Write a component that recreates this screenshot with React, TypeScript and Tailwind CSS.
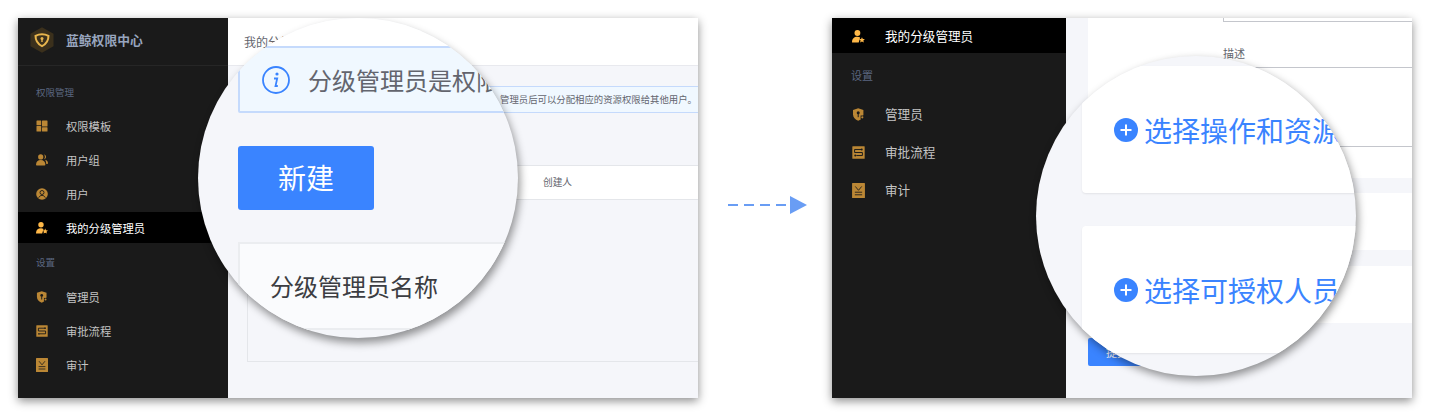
import React from 'react';

const font = { fontFamily: '"Noto Sans CJK SC", "Liberation Sans", sans-serif' };

const GridIcon = () => (
  <svg viewBox="0 0 12 12" className="h-full w-full" fill="currentColor">
    <rect x="0.500" y="0.500" width="4.700" height="4.700" rx="0.500" />
    <rect x="6" y="0.500" width="5.500" height="6" rx="0.500" />
    <rect x="0.500" y="6" width="4.700" height="5.500" rx="0.500" />
    <rect x="6" y="7.300" width="5.500" height="4.200" rx="0.500" />
  </svg>
);

const UsersIcon = () => (
  <svg viewBox="0 0 12 12" className="h-full w-full" fill="currentColor">
    <circle cx="4.700" cy="2.900" r="2.600" />
    <path d="M0 10.800c0-3 1.900-4.700 4.700-4.700s4.700 1.700 4.700 4.700c0 .4-.3.700-.7.700H.7c-.4 0-.7-.3-.7-.7z" />
    <path d="M8 .6c1.200.2 2 1.100 2 2.300S9.200 5 8 5.200c.6-.6.9-1.400.9-2.300S8.600 1.200 8 .6z" />
    <path d="M9.200 5.800c1.700.4 2.800 1.700 2.800 3.500 0 .5-.3.800-.8.800h-.9c-.1-1.700-.5-3.100-1.100-4.300z" />
  </svg>
);

const UserCircleIcon = () => (
  <svg viewBox="0 0 12 12" className="h-full w-full">
    <circle cx="6" cy="6" r="5.800" fill="currentColor" />
    <circle cx="6" cy="4.500" r="2" fill="none" stroke="#1a1a1a" strokeWidth="0.900" />
    <path d="M2.700 9.700c.6-1.500 1.900-2.300 3.300-2.300s2.700.8 3.300 2.300" fill="none" stroke="#1a1a1a" strokeWidth="0.900" />
  </svg>
);

const AdminStarIcon = () => (
  <svg viewBox="0 0 12 12" className="h-full w-full" fill="currentColor">
    <circle cx="5" cy="2.800" r="2.700" />
    <path d="M0 11.200c0-3 1.900-4.900 5-4.900 1 0 1.800.2 2.500.6L6.200 11.600H.4c-.2 0-.4-.2-.4-.4z" />
    <path d="M9.200 6.600l.8 1.600 1.900.2-1.400 1.300.4 1.900-1.700-.9-1.700.9.400-1.900-1.400-1.300 1.900-.2z" />
  </svg>
);

const ShieldIcon = () => (
  <svg viewBox="0 0 11 13" className="h-full w-full">
    <path d="M5.200 0.200L10.400 1.900v4.600c0 3-2.300 5-5.200 6.300C2.300 11.500 0 9.500 0 6.500V1.900z" fill="currentColor" />
    <circle cx="5.200" cy="4.800" r="1.500" fill="#1a1a1a" />
    <rect x="4.700" y="5.800" width="1" height="3.400" fill="#1a1a1a" />
    <rect x="7.600" y="7.500" width="3.400" height="3.600" fill="#1a1a1a" />
    <circle cx="9.300" cy="9.300" r="1.100" fill="currentColor" />
  </svg>
);

const FlowIcon = () => (
  <svg viewBox="0 0 12 12" className="h-full w-full">
    <rect x="0.300" y="0.300" width="11.400" height="11.400" rx="0.500" fill="currentColor" />
    <path d="M2.400 3.200h6M2.400 3.200v2.800h7.200v2.800H4" fill="none" stroke="#1a1a1a" strokeWidth="0.900" />
    <circle cx="9" cy="3.200" r="0.900" fill="#1a1a1a" />
    <circle cx="3" cy="8.800" r="0.900" fill="#1a1a1a" />
  </svg>
);

const AuditIcon = () => (
  <svg viewBox="0 0 12 14" className="h-full w-full">
    <rect x="0" y="0" width="12" height="14" rx="0.500" fill="currentColor" />
    <path d="M3 3.200l3 3.600 3-3.600M2.600 8.600h6.800M2.600 11h6.800" fill="none" stroke="#1a1a1a" strokeWidth="0.800" />
  </svg>
);

const Logo = () => (
  <svg viewBox="0 0 24 26" className="h-[26px] w-[24px]">
    <path d="M12 0.300L23.500 6.800v12.400L12 25.700 0.500 19.200V6.800z" fill="#3b301c" />
    <path d="M12 7.200c2.300 0 4.500.6 6.500 1.600 0 4.600-2.300 8.300-6.500 10.400-4.200-2.100-6.500-5.800-6.500-10.400 2-1 4.200-1.600 6.500-1.600z" fill="none" stroke="#e8b54d" strokeWidth="2" />
    <circle cx="12" cy="11.500" r="1.500" fill="#e8b54d" />
    <rect x="11.300" y="12" width="1.400" height="3" fill="#e8b54d" />
  </svg>
);

// left window's sidebar row
const NavRow = ({ icon, label, active, tall }: { icon: React.ReactNode; label: string; active?: boolean; tall?: boolean }) => (
  <div className={`mb-[2px] flex items-center pl-[18px] ${active ? 'h-[31px] bg-black pt-[1px]' : 'h-[32px]'}`}>
    <span className={`flex w-[12px] items-center ${tall ? 'h-[14px]' : 'h-[12px]'} ${active ? 'text-[#ffb848]' : 'text-[#bb8735]'}`}>{icon}</span>
    <span className={`ml-[18px] text-[11.3px] ${active ? 'text-white' : 'text-[#c4c4c4]'}`}>{label}</span>
  </div>
);

// right window's sidebar row, a bit larger
const BigNavRow = ({ icon, label, active, tall }: { icon: React.ReactNode; label: string; active?: boolean; tall?: boolean }) => (
  <div className={`flex items-center pl-[20px] ${active ? 'h-[35px] bg-black pt-[1px]' : 'h-[38px]'}`}>
    <span className={`flex w-[13px] items-center ${tall ? 'h-[15px]' : 'h-[13px]'} ${active ? 'text-[#ffb848]' : 'text-[#bb8735]'}`}>{icon}</span>
    <span className={`ml-[20px] text-[12.6px] ${active ? 'text-white' : 'text-[#c4c4c4]'}`}>{label}</span>
  </div>
);

const PlusCircle = () => (
  <svg viewBox="0 0 24 24" className="h-[24px] w-[24px] shrink-0">
    <circle cx="12" cy="12" r="12" fill="#3a84ff" />
    <path d="M12 6.500v11M6.500 12h11" stroke="#fff" strokeWidth="2" />
  </svg>
);

const LeftWindow = () => (
  <div className="relative flex h-[380px] w-[680px] shrink-0 overflow-hidden shadow-[0_3px_9px_rgba(0,0,0,0.45)]">
    <aside className="w-[210px] shrink-0 bg-[#1a1a1a]">
      <div className="flex h-[48px] items-center border-b border-[#262626] pb-[4px] pl-[12px]">
        <Logo />
        <span className="ml-[12px] text-[12.8px] font-bold text-[#98a5be]">蓝鲸权限中心</span>
      </div>
      <div className="mt-[18px] h-[16px] pl-[18px] text-[9.5px] leading-[16px] text-[#5b6780]">权限管理</div>
      <div className="mt-[10px]">
        <NavRow icon={<GridIcon />} label="权限模板" />
        <NavRow icon={<UsersIcon />} label="用户组" />
        <NavRow icon={<UserCircleIcon />} label="用户" />
        <NavRow icon={<AdminStarIcon />} label="我的分级管理员" active />
      </div>
      <div className="mt-[11px] h-[16px] pl-[18px] text-[9.5px] leading-[16px] text-[#5b6780]">设置</div>
      <div className="mt-[11px]">
        <NavRow icon={<ShieldIcon />} label="管理员" />
        <NavRow icon={<FlowIcon />} label="审批流程" />
        <NavRow icon={<AuditIcon />} label="审计" tall />
      </div>
    </aside>

    <main className="flex-1 overflow-hidden bg-[#f5f6fa]">
      <div className="flex h-[48px] items-center border-b border-[#e8e9ee] bg-white pl-[16px] text-[12px] text-[#63656e]">
        我的分级管理员
      </div>
      <div className="pl-[19px]">
        <div className="mt-[20px] flex h-[27px] w-[460px] items-center justify-end whitespace-nowrap border border-[#c5dafc] bg-[#f0f8ff] pr-[9px] text-[9.4px] text-[#63656e]">
          管理员后可以分配相应的资源权限给其他用户。
        </div>
        <div className="mt-[52px] h-[197px] w-[460px] border border-[#e4e6ea]">
          <div className="flex h-[34px] items-center border-b border-[#e4e6ea] bg-white pl-[295px] text-[9.7px] text-[#63656e]">
            创建人
          </div>
        </div>
      </div>
    </main>

    {/* magnifier */}
    <div className="absolute left-[180px] top-0 h-[320px] w-[320px] overflow-hidden rounded-full bg-[#f5f6fa] shadow-[2px_5px_9px_rgba(0,0,0,0.42)]">
      <div className="h-[28px] bg-white" />
      <div className="ml-[40px] flex h-[67px] w-[400px] items-center rounded-[2px] border-2 border-[#c5dafc] bg-[#f0f8ff] pl-[22px]">
        <svg viewBox="0 0 28 28" className="h-[28px] w-[28px] shrink-0">
          <circle cx="14" cy="14" r="13" fill="none" stroke="#3a84ff" strokeWidth="1.800" />
          <circle cx="15" cy="8" r="1.600" fill="#3a84ff" />
          <path d="M12 12.500h3.200l-1.700 7.500h2.300" fill="none" stroke="#3a84ff" strokeWidth="1.800" />
        </svg>
        <span className="ml-[18px] whitespace-nowrap text-[24px] text-[#63656e]">分级管理员是权限</span>
      </div>
      <div className="ml-[40px] mt-[33px] flex h-[64px] w-[136px] items-center justify-center rounded-[3px] bg-[#3a84ff] pb-[2px] text-[28px] text-white">
        新建
      </div>
      <div className="ml-[40px] mt-[32px] h-[88px] w-[400px] border-2 border-[#ebedf0] bg-[#fafbfd] pl-[30px] pt-[24px] text-[24px] leading-[36px] text-[#3c3d42]">
        分级管理员名称
      </div>
    </div>
  </div>
);

const RightWindow = () => (
  <div className="relative flex h-[380px] w-[580px] shrink-0 overflow-hidden shadow-[0_3px_9px_rgba(0,0,0,0.45)]">
    <aside className="w-[234px] shrink-0 bg-[#1a1a1a]">
      <BigNavRow icon={<AdminStarIcon />} label="我的分级管理员" active />
      <div className="mt-[14px] h-[16px] pl-[19px] text-[11px] leading-[16px] text-[#5b6780]">设置</div>
      <div className="mt-[12px]">
        <BigNavRow icon={<ShieldIcon />} label="管理员" />
        <BigNavRow icon={<FlowIcon />} label="审批流程" />
        <BigNavRow icon={<AuditIcon />} label="审计" tall />
      </div>
    </aside>

    <main className="flex-1 overflow-hidden bg-[#f5f6fa] pl-[22px]">
      <div className="h-[160px] rounded-bl-[2px] bg-white pl-[135px]">
        <div className="h-[4px] w-[400px] border-x border-b border-[#c4c6cc]" />
        <div className="mt-[22px] h-[18px] text-[11px] leading-[18px] text-[#63656e]">描述</div>
        <div className="mt-[5px] h-[80px] w-[400px] border border-[#c4c6cc]" />
      </div>
      <div className="mt-[15px] h-[57px] bg-white" />
      <div className="mt-[16px] h-[57px] bg-white" />
      <div className="mt-[15px] flex h-[28px] w-[58px] items-center justify-center rounded-[2px] bg-[#3a84ff] text-[11px] text-white">
        提交
      </div>
    </main>

    {/* magnifier */}
    <div className="absolute left-[204px] top-[38px] h-[320px] w-[320px] overflow-hidden rounded-full bg-[#f5f6fa] shadow-[2px_4px_8px_rgba(0,0,0,0.42)]">
      <div className="ml-[46px] mt-[10px] flex h-[127px] w-[400px] items-center rounded-[4px] bg-white pl-[32px] shadow-[0_1px_2px_rgba(0,0,0,0.08)]">
        <PlusCircle />
        <span className="ml-[6px] whitespace-nowrap text-[28px] text-[#3a84ff]">选择操作和资源</span>
      </div>
      <div className="ml-[46px] mt-[33px] flex h-[127px] w-[400px] items-center rounded-[4px] bg-white pl-[32px] shadow-[0_1px_2px_rgba(0,0,0,0.08)]">
        <PlusCircle />
        <span className="ml-[6px] whitespace-nowrap text-[28px] text-[#3a84ff]">选择可授权人员</span>
      </div>
    </div>
  </div>
);

const Arrow = () => (
  <div className="flex w-[134px] shrink-0 items-center gap-[6px] pb-[6px] pl-[30px]">
    <span className="h-[2px] w-[10px] bg-[#699df4]" />
    <span className="h-[2px] w-[10px] bg-[#699df4]" />
    <span className="h-[2px] w-[10px] bg-[#699df4]" />
    <span className="h-[2px] w-[10px] bg-[#699df4]" />
    <svg viewBox="0 0 17 18" className="-ml-[2px] h-[18px] w-[17px] shrink-0">
      <path d="M0 0L17 9L0 18z" fill="#699df4" />
    </svg>
  </div>
);

const App = () => (
  <div className="flex h-[416px] w-[1430px] overflow-hidden bg-white pl-[18px] pt-[18px]" style={font}>
    <div className="flex h-[380px]">
      <LeftWindow />
      <Arrow />
      <RightWindow />
    </div>
  </div>
);

export default App;
